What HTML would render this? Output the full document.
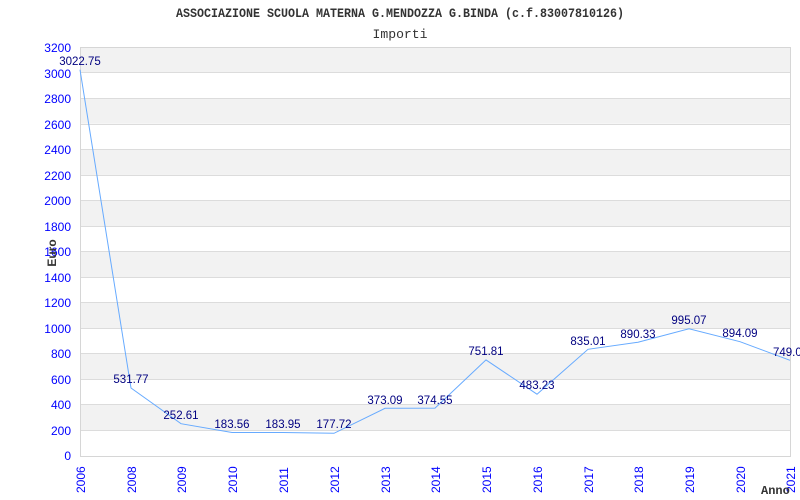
<!DOCTYPE html>
<html><head><meta charset="utf-8"><style>html,body{margin:0;padding:0;background:#fff;width:800px;height:500px;overflow:hidden}</style></head>
<body>
<svg width="800" height="500" xmlns="http://www.w3.org/2000/svg" font-family="Liberation Sans, sans-serif">
<rect width="800" height="500" fill="#fff"/>
<g fill="#f2f2f2">
<rect x="80" y="47" width="710" height="25.6"/>
<rect x="80" y="98.1" width="710" height="25.6"/>
<rect x="80" y="149.3" width="710" height="25.6"/>
<rect x="80" y="200.4" width="710" height="25.6"/>
<rect x="80" y="251.5" width="710" height="25.6"/>
<rect x="80" y="302.6" width="710" height="25.6"/>
<rect x="80" y="353.8" width="710" height="25.6"/>
<rect x="80" y="404.9" width="710" height="25.6"/>
</g>
<g stroke="#dcdcdc" stroke-width="1">
<line x1="80" y1="72.5" x2="790" y2="72.5"/><line x1="80" y1="98.5" x2="790" y2="98.5"/>
<line x1="80" y1="124.5" x2="790" y2="124.5"/><line x1="80" y1="149.5" x2="790" y2="149.5"/>
<line x1="80" y1="175.5" x2="790" y2="175.5"/><line x1="80" y1="200.5" x2="790" y2="200.5"/>
<line x1="80" y1="226.5" x2="790" y2="226.5"/><line x1="80" y1="251.5" x2="790" y2="251.5"/>
<line x1="80" y1="277.5" x2="790" y2="277.5"/><line x1="80" y1="302.5" x2="790" y2="302.5"/>
<line x1="80" y1="328.5" x2="790" y2="328.5"/><line x1="80" y1="353.5" x2="790" y2="353.5"/>
<line x1="80" y1="379.5" x2="790" y2="379.5"/><line x1="80" y1="404.5" x2="790" y2="404.5"/>
<line x1="80" y1="430.5" x2="790" y2="430.5"/>
</g>
<rect x="80.5" y="47.5" width="710" height="409" fill="none" stroke="#d6d6d6"/>
<text x="400" y="17" font-family="Liberation Mono, monospace" font-weight="bold" font-size="12.5" fill="#333" text-anchor="middle" textLength="448" lengthAdjust="spacingAndGlyphs">ASSOCIAZIONE SCUOLA MATERNA G.MENDOZZA G.BINDA (c.f.83007810126)</text>
<text x="400" y="38" font-family="Liberation Mono, monospace" font-size="13" fill="#333" text-anchor="middle" textLength="55" lengthAdjust="spacingAndGlyphs">Importi</text>
<g fill="#0000ff" font-size="12" text-anchor="end">
<text x="71" y="52">3200</text><text x="71" y="78">3000</text><text x="71" y="103">2800</text>
<text x="71" y="129">2600</text><text x="71" y="154">2400</text><text x="71" y="180">2200</text>
<text x="71" y="205">2000</text><text x="71" y="231">1800</text><text x="71" y="256">1600</text>
<text x="71" y="282">1400</text><text x="71" y="307">1200</text><text x="71" y="333">1000</text>
<text x="71" y="358">800</text><text x="71" y="384">600</text><text x="71" y="409">400</text>
<text x="71" y="435">200</text><text x="71" y="460">0</text>
</g>
<text transform="translate(56,253) rotate(-90)" font-size="12" font-weight="bold" fill="#333" text-anchor="middle">Euro</text>
<g fill="#0000ff" font-size="12">
<text transform="translate(85,493) rotate(-90)">2006</text>
<text transform="translate(136,493) rotate(-90)">2008</text>
<text transform="translate(186,493) rotate(-90)">2009</text>
<text transform="translate(237,493) rotate(-90)">2010</text>
<text transform="translate(288,493) rotate(-90)">2011</text>
<text transform="translate(339,493) rotate(-90)">2012</text>
<text transform="translate(390,493) rotate(-90)">2013</text>
<text transform="translate(440,493) rotate(-90)">2014</text>
<text transform="translate(491,493) rotate(-90)">2015</text>
<text transform="translate(542,493) rotate(-90)">2016</text>
<text transform="translate(593,493) rotate(-90)">2017</text>
<text transform="translate(643,493) rotate(-90)">2018</text>
<text transform="translate(694,493) rotate(-90)">2019</text>
<text transform="translate(745,493) rotate(-90)">2020</text>
<text transform="translate(795,493) rotate(-90)">2021</text>
</g>
<text x="761" y="494" font-family="Liberation Mono, monospace" font-weight="bold" font-size="12" fill="#333">Anno</text>
<polyline fill="none" stroke="#66aaff" stroke-width="1" points="80,69.7 131,388 181,423.7 232,432.5 283,432.5 334,433.3 385,408.3 435,408.1 486,359.9 537,394.2 588,349.3 638,342.2 689,328.8 740,341.7 790,360.3"/>
<g fill="#000080" font-size="11.5" text-anchor="middle">
<text x="80" y="65">3022.75</text>
<text x="131" y="383">531.77</text>
<text x="181" y="419">252.61</text>
<text x="232" y="428">183.56</text>
<text x="283" y="428">183.95</text>
<text x="334" y="428">177.72</text>
<text x="385" y="404">373.09</text>
<text x="435" y="404">374.55</text>
<text x="486" y="355">751.81</text>
<text x="537" y="389">483.23</text>
<text x="588" y="345">835.01</text>
<text x="638" y="338">890.33</text>
<text x="689" y="324">995.07</text>
<text x="740" y="337">894.09</text>
<text x="773" y="356" text-anchor="start">749.0</text>
</g>
</svg>
</body></html>
